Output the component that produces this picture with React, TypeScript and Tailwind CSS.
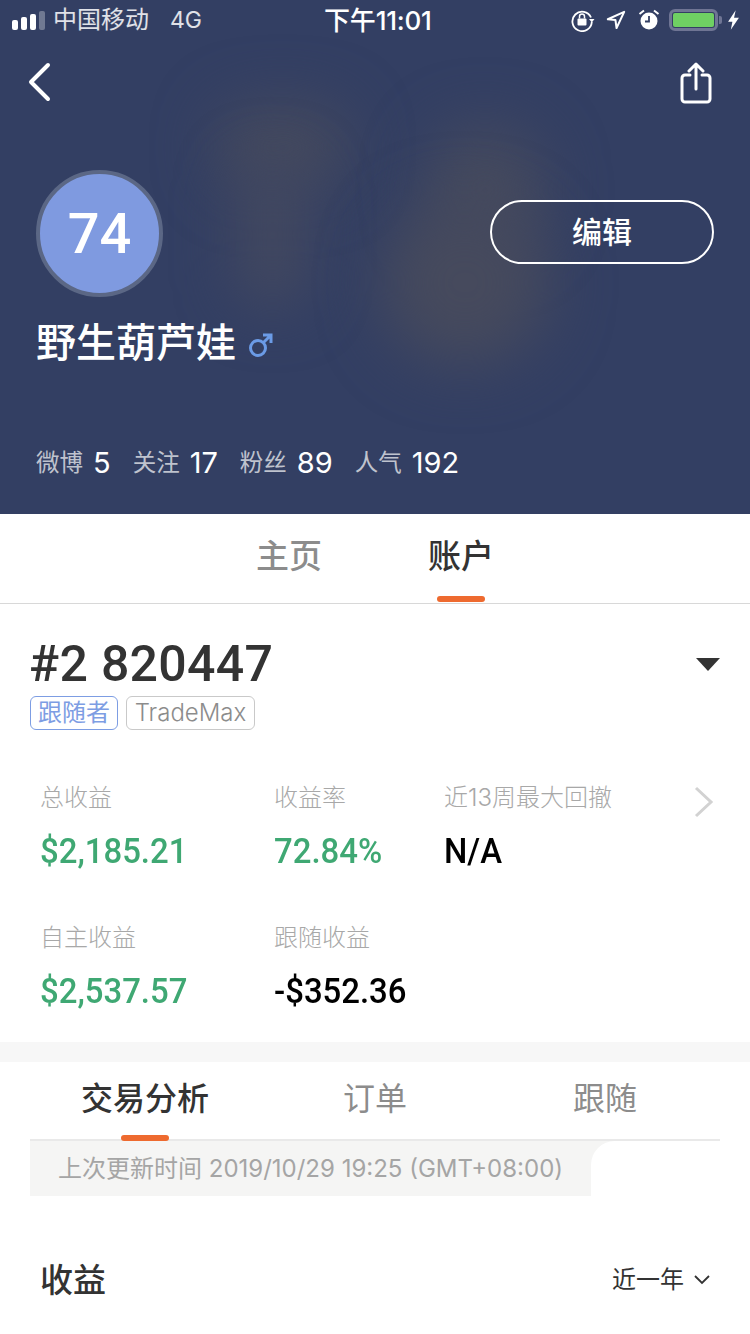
const sans = "font-['Inter','Noto_Sans_CJK_SC',sans-serif]";

function Signal() {
  return (
    <div className="flex items-end gap-[3px] h-[19px]">
      <span className="w-[6px] h-[10px] rounded-[2px] bg-white" />
      <span className="w-[6px] h-[13px] rounded-[2px] bg-white" />
      <span className="w-[6px] h-[16px] rounded-[2px] bg-white" />
      <span className="w-[6px] h-[19px] rounded-[2px] bg-white/30" />
    </div>
  );
}

function StatusIcons() {
  return (
    <div className="flex items-center">
      <svg width="24" height="24" viewBox="0 0 24 24" fill="none" stroke="white" strokeWidth="1.8" className="mr-[11px]">
        <path d="M20 9.5A9.7 9.7 0 1 0 20.8 14" />
        <path d="M18 11h5.5l-2.7 3.4z" fill="white" stroke="none" />
        <rect x="6.5" y="10.5" width="9" height="7" rx="1" fill="white" stroke="none" />
        <path d="M8.5 10.5V8.5a2.5 2.5 0 0 1 5 0v2" strokeWidth="1.5" />
      </svg>
      <svg width="20" height="20" viewBox="0 0 22 22" fill="none" stroke="white" strokeWidth="2.2" strokeLinejoin="round" className="mr-[12px]">
        <path d="M20 2 2 10.2l8.4.9 1.2 8.7z" />
      </svg>
      <svg width="22" height="24" viewBox="0 0 22 24" className="mr-[9px]">
        <circle cx="11" cy="13" r="8.5" fill="white" />
        <path d="M11 8v5.5H7" fill="none" stroke="#333f63" strokeWidth="1.8" />
        <path d="M1.5 6 6 2.5M20.5 6 16 2.5" stroke="white" strokeWidth="2" />
      </svg>
      <div className="flex items-center">
        <div className="w-[49px] h-[22px] rounded-[6px] border-[3px] border-[#6f7594] p-[1px]">
          <div className="w-full h-full rounded-[2px] bg-[#6fd063]" />
        </div>
        <span className="w-[3px] h-[8px] rounded-r-[2px] bg-[#6f7594] ml-[1px]" />
      </div>
      <svg width="13" height="22" viewBox="0 0 12 20" fill="white" className="ml-[5px]">
        <path d="M8 1 1 11.5h4L3.5 19 11 8H6.5z" />
      </svg>
    </div>
  );
}

function Stat({ label, value }: { label: string; value: string }) {
  return (
    <div className="flex items-center gap-[10px]">
      <span className="text-[23.5px] text-white/70">{label}</span>
      <span className="text-[29px] text-white">{value}</span>
    </div>
  );
}

function Metric({ label, value, color, width }: { label: string; value: string; color: string; width: string }) {
  return (
    <div className={width}>
      <div className="text-[24px] leading-[34px] font-light text-[#a8a8a8]">{label}</div>
      <div className={`inline-block origin-left scale-x-[0.94] mt-[17px] text-[35px] leading-[40px] font-medium font-['Roboto'] ${color}`}>
        {value}
      </div>
    </div>
  );
}

export default function App() {
  return (
    <div className={`w-[750px] h-[1334px] overflow-hidden bg-white ${sans}`}>
      {/* Header */}
      <header className="relative h-[514px] overflow-hidden bg-[#333f63]">
        <div className="absolute left-[215px] top-[105px] w-[135px] h-[85px] rounded-full bg-[#454a5e] blur-[30px]" />
        <div className="absolute left-[235px] top-[160px] w-[75px] h-[150px] rounded-full bg-[#424860] blur-[28px]" />
        <div className="absolute left-[425px] top-[125px] w-[120px] h-[130px] rounded-full bg-[#454a5e] blur-[30px]" />
        <div className="absolute left-[380px] top-[200px] w-[170px] h-[165px] rounded-full bg-[#464a5d] blur-[30px]" />

        <div className="relative">
          <div className="flex items-center h-[40px] pl-[12px] pr-[10px]">
            <Signal />
            <span className="ml-[8px] text-[24px] text-white/85">中国移动</span>
            <span className="ml-[21px] text-[23px] text-white/85">4G</span>
            <span className="ml-[122px] text-[26px] font-medium tracking-[-0.2px] text-white">下午11:01</span>
            <div className="ml-auto">
              <StatusIcons />
            </div>
          </div>

          <div className="flex items-start justify-between h-[130px] pl-[28px] pr-[38px] pt-[21px]">
            <svg width="24" height="42" viewBox="0 0 24 42" fill="none" stroke="white" strokeWidth="4" strokeLinecap="round" strokeLinejoin="round">
              <path d="M20 4 3 21l17 17" />
            </svg>
            <svg width="32" height="42" viewBox="0 0 32 42" fill="none" stroke="white" strokeWidth="3" strokeLinecap="round" strokeLinejoin="round" className="mt-[1px]">
              <path d="M10 13H5a3 3 0 0 0-3 3v21a3 3 0 0 0 3 3h22a3 3 0 0 0 3-3V16a3 3 0 0 0-3-3h-5" />
              <path d="M16 27V2.5M9 9l7-7 7 7" />
            </svg>
          </div>

          <div className="flex items-start justify-between pl-[36px] pr-[36px]">
            <div className="flex items-center justify-center w-[127px] h-[127px] rounded-full bg-[#7f9ae0] border-[4px] border-[#5b6785] font-['Roboto'] text-[56px] font-medium text-white">
              74
            </div>
            <button className="mt-[30px] w-[224px] h-[64px] rounded-full border-2 border-white text-[30px] font-medium text-white">
              编辑
            </button>
          </div>

          <div className="flex items-center mt-[22px] pl-[36px] h-[48px]">
            <span className="text-[40px] font-medium text-white">野生葫芦娃</span>
            <svg width="26" height="26" viewBox="0 0 26 26" fill="none" stroke="#6b9be6" strokeWidth="3" className="ml-[12px] mt-[4px]">
              <circle cx="10" cy="16" r="7.5" />
              <path d="M15.5 10.5 23 3M15 3h8v8" />
            </svg>
          </div>

          <div className="flex items-center gap-[22px] mt-[74px] pl-[36px]">
            <Stat label="微博" value="5" />
            <Stat label="关注" value="17" />
            <Stat label="粉丝" value="89" />
            <Stat label="人气" value="192" />
          </div>
        </div>
      </header>

      {/* Main tabs */}
      <nav className="flex justify-center gap-[106px] h-[90px] border-b border-[#d8d8d8]">
        <div className="pt-[20px] text-[33px] leading-[44px] font-medium text-[#8c8c8c]">主页</div>
        <div className="relative pt-[20px] text-[33px] leading-[44px] font-medium text-[#333333]">
          账户
          <span className="absolute left-[9px] bottom-[1px] w-[48px] h-[6px] rounded-[3px] bg-[#ee6a2f]" />
        </div>
      </nav>

      {/* Account */}
      <section className="h-[438px] pt-[32px]">
        <div className="flex items-center justify-between pl-[29px] pr-[30px]">
          <div className="font-['Roboto'] text-[50px] leading-[56px] font-medium tracking-[0.3px] text-[#333333]">#2 820447</div>
          <span className="w-0 h-0 border-x-[12px] border-t-[13px] border-x-transparent border-t-[#333333]" />
        </div>
        <div className="flex gap-[8px] mt-[4px] pl-[30px]">
          <span className="flex items-center justify-center w-[88px] h-[34px] rounded-[6px] border border-[#7d9de3] text-[24px] text-[#7d9de3]">跟随者</span>
          <span className="flex items-center justify-center w-[129px] h-[34px] rounded-[6px] border border-[#c9c9c9] text-[24px] font-light text-[#8c8c8c]">TradeMax</span>
        </div>

        <div className="flex mt-[51px] pl-[40px] pr-[36px]">
          <Metric label="总收益" value="$2,185.21" color="text-[#3fa873]" width="w-[234px]" />
          <Metric label="收益率" value="72.84%" color="text-[#3fa873]" width="w-[170px]" />
          <Metric label="近13周最大回撤" value="N/A" color="text-black" width="w-[250px]" />
          <svg width="20" height="32" viewBox="0 0 20 32" fill="none" stroke="#d2d2d2" strokeWidth="3" className="mt-[5px]">
            <path d="M2 2l15 14L2 30" />
          </svg>
        </div>
        <div className="flex mt-[49px] pl-[40px]">
          <Metric label="自主收益" value="$2,537.57" color="text-[#3fa873]" width="w-[234px]" />
          <Metric label="跟随收益" value="-$352.36" color="text-black" width="w-[170px]" />
        </div>
      </section>

      <div className="h-[20px] bg-[#f7f7f7]" />

      {/* Sub tabs */}
      <div className="mx-[30px] flex h-[79px] border-b-2 border-[#e9e9e9] text-[32px] leading-[44px]">
        <div className="relative w-[230px] pt-[15px] text-center font-medium text-[#333333]">
          交易分析
          <span className="absolute left-[91px] -bottom-[2px] w-[48px] h-[6px] rounded-[3px] bg-[#ee6a2f]" />
        </div>
        <div className="w-[230px] pt-[15px] text-center text-[#8c8c8c]">订单</div>
        <div className="w-[230px] pt-[15px] text-center text-[#8c8c8c]">跟随</div>
      </div>

      <div className="mx-[30px] flex">
        <div className="w-[561px] h-[55px] pl-[28px] bg-[#f5f5f4] text-[24px] leading-[55px] text-[#a5a5a5]">
          上次更新时间 2019/10/29 19:25 (GMT+08:00)
        </div>
        <div className="w-[24px] h-[24px] bg-[#f5f5f4]">
          <div className="w-full h-full rounded-tl-[24px] bg-white" />
        </div>
      </div>

      <div className="flex items-center justify-between mt-[60px] pl-[40px] pr-[40px]">
        <div className="text-[33px] leading-[48px] font-medium text-[#333333]">收益</div>
        <div className="flex items-center gap-[10px] text-[24px] text-[#333333]">
          近一年
          <svg width="16" height="10" viewBox="0 0 16 10" fill="none" stroke="#333333" strokeWidth="1.8">
            <path d="M1 1l7 7 7-7" />
          </svg>
        </div>
      </div>
    </div>
  );
}
